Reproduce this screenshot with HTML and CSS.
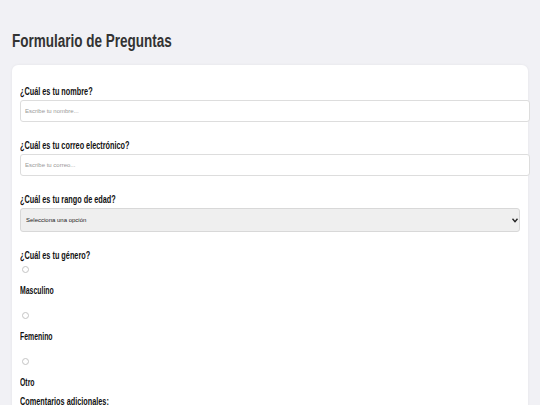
FILE: index.html
```html
<!DOCTYPE html>
<html lang="es">
<head>
    <meta charset="UTF-8">
    <meta name="viewport" content="width=device-width, initial-scale=1.0">
    <title>Formulario de Preguntas</title>
    <link rel="stylesheet" href="styles.css">
</head>
<body>
    <h1>Formulario de Preguntas</h1>

    <form id="form-card">
        <div class="question">
            <label for="nombre">¿Cuál es tu nombre?</label>
            <input type="text" id="nombre" placeholder="Escribe tu nombre...">
        </div>

        <div class="question">
            <label for="correo">¿Cuál es tu correo electrónico?</label>
            <input type="email" id="correo" placeholder="Escribe tu correo...">
        </div>

        <div class="question">
            <label for="edad">¿Cuál es tu rango de edad?</label>
            <div class="select-wrap">
                <select id="edad">
                    <option value="">Selecciona una opción</option>
                    <option value="18-25">18 - 25</option>
                    <option value="26-35">26 - 35</option>
                    <option value="36-50">36 - 50</option>
                    <option value="50+">Más de 50</option>
                </select>
                <svg class="select-arrow" width="6" height="5" viewBox="0 0 6 5">
                    <path d="M0.5 0.8 L3 3.6 L5.5 0.8" fill="none" stroke="#222" stroke-width="1.4"/>
                </svg>
            </div>
        </div>

        <div class="question radio-group">
            <label>¿Cuál es tu género?</label>
            <div class="option">
                <input type="radio" name="genero" id="masculino" value="masculino">
                <label for="masculino">Masculino</label>
            </div>
            <div class="option">
                <input type="radio" name="genero" id="femenino" value="femenino">
                <label for="femenino">Femenino</label>
            </div>
            <div class="option">
                <input type="radio" name="genero" id="otro" value="otro">
                <label for="otro">Otro</label>
            </div>
        </div>

        <div class="question">
            <label for="comentarios">Comentarios adicionales:</label>
            <textarea id="comentarios" rows="4" placeholder="Escribe tus comentarios..."></textarea>
        </div>
    </form>
</body>
</html>
```

FILE: styles.css
```css
body {
    font-family: "Liberation Sans", Arial, sans-serif;
    background-color: #f1f1f5;
    color: #111;
    margin: 0;
    padding: 0 12px 20px;
}
/* the font is a condensed grotesk, squeeze the plain one */
h1 {
    font-size: 18px;
    line-height: 22px;
    color: #333;
    margin: 30px 0 13px;
    transform: scaleX(0.75);
    transform-origin: left center;
}
#form-card {
    background-color: white;
    border-radius: 6px;
    box-shadow: 0 0 3px rgba(0,0,0,0.06);
    padding: 20px 8px;
}
.question {
    margin-bottom: 17px;
}
.question label {
    display: block;
    font-size: 10px;
    line-height: 12px;
    font-weight: bold;
    padding-top: 1px;
    margin-bottom: 2px;
    transform: scaleX(0.73);
    transform-origin: left center;
}
.question input[type="text"],
.question input[type="email"],
.question textarea {
    display: block;
    width: 100%;
    height: 20px;
    padding: 0 4px;
    margin: 0;
    border: 1px solid #ddd;
    border-radius: 3px;
    font-family: inherit;
    font-size: 6px;
    color: #333;
}
.question textarea {
    height: 60px;
}
.question input::placeholder,
.question textarea::placeholder {
    color: #999;
}
.select-wrap {
    position: relative;
}
.question select {
    display: block;
    width: 100%;
    height: 24px;
    margin: 0;
    padding: 0 5px;
    border: 1px solid #d8d8d8;
    border-radius: 3px;
    background-color: #efefef;
    font-family: inherit;
    font-size: 6px;
    color: #222;
    appearance: none;
    -webkit-appearance: none;
}
.select-arrow {
    position: absolute;
    right: 2px;
    top: 10px;
    pointer-events: none;
}
.radio-group {
    margin-bottom: 6px;
}
.radio-group > label {
    margin-bottom: 4px;
}
.option {
    margin-top: 15px;
}
.radio-group > label + .option {
    margin-top: 0;
}
.option input[type="radio"] {
    display: block;
    appearance: none;
    -webkit-appearance: none;
    width: 7px;
    height: 7px;
    margin: 0 0 11px 2px;
    border: 1px solid #c4c4c4;
    border-radius: 50%;
    background: white;
}
.option input[type="radio"]:checked {
    background: radial-gradient(#333 40%, white 45%);
}
.option label {
    margin-bottom: 0;
    transform: scaleX(0.69);
}
```
